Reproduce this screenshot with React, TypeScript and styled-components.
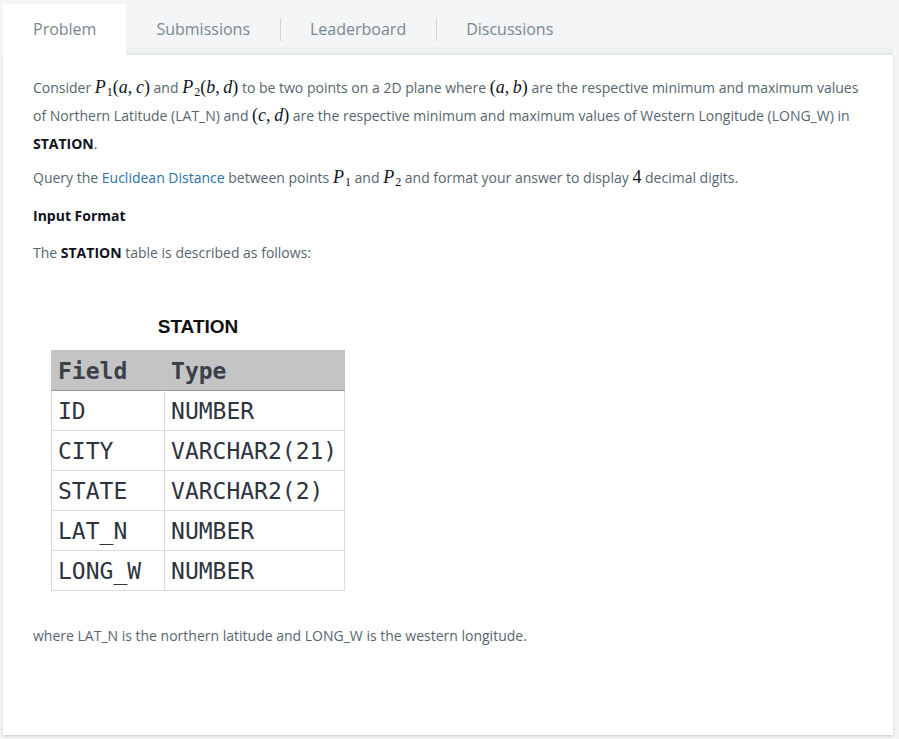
import React from "react";
import styled, { createGlobalStyle } from "styled-components";

const Global = createGlobalStyle`
  html, body { margin: 0; padding: 0; background: #f3f5f6; }
  body { font-family: "Open Sans", "Noto Sans", sans-serif; }
  * { box-sizing: border-box; }
`;

const Page = styled.div`
  height: 739px;
  padding: 4px 6px 4px 3px;
  display: flex;
  flex-direction: column;
`;

const TabBar = styled.div`
  display: flex;
  align-items: stretch;
  height: 51px;
  background: linear-gradient(to bottom, #f3f5f6 0%, #f3f5f6 80%, #e8ebec 100%);
`;

const Tab = styled.div<{ $active?: boolean; $sep?: boolean }>`
  position: relative;
  display: flex;
  align-items: center;
  padding: 0 30px 2px 30px;
  font-size: 16px;
  color: #79888f;
  background: ${(p) => (p.$active ? "#ffffff" : "transparent")};
  ${(p) =>
    p.$sep &&
    `
    &::before {
      content: "";
      position: absolute;
      left: 0;
      top: 14px;
      height: 23px;
      width: 1px;
      background: #cfd5d8;
    }
  `}
`;

const Card = styled.div`
  flex: 1;
  background: #ffffff;
  box-shadow: 0 1px 3px rgba(0, 0, 0, 0.18);
  padding: 19px 30px 30px 30px;
  color: #56666f;
  font-size: 14px;
`;

const Para = styled.p<{ $mt?: number }>`
  margin: ${(p) => p.$mt ?? 0}px 0 0 0;
  line-height: 28px;
`;

const Heading = styled.p<{ $mt?: number }>`
  margin: ${(p) => p.$mt ?? 0}px 0 0 0;
  line-height: 28px;
  font-weight: 700;
  color: #0e141e;
`;

const Strong = styled.strong`
  color: #0e141e;
  font-weight: 700;
`;

const Link = styled.a`
  color: #2b72a8;
  text-decoration: none;
`;

const M = styled.span`
  font-family: "Liberation Serif", "DejaVu Serif", serif;
  font-style: italic;
  font-size: 18px;
  line-height: 1;
  color: #0e141e;
`;

const MU = styled.span`
  font-family: "Liberation Serif", "DejaVu Serif", serif;
  font-style: normal;
  font-size: 18px;
  line-height: 1;
  color: #0e141e;
`;

const Sub = styled.span`
  display: inline-block;
  font-style: normal;
  font-size: 12px;
  line-height: 1;
  transform: translateY(3px);
  margin-left: 1px;
`;

const Figure = styled.div`
  margin: 47px 0 0 18px;
  width: 294px;
`;

const FigTitle = styled.div`
  font-family: "Liberation Sans", Arial, sans-serif;
  font-weight: 700;
  font-size: 19px;
  color: #111;
  text-align: center;
  line-height: 26px;
  margin-bottom: 10px;
`;

const Table = styled.table`
  border-collapse: collapse;
  width: 294px;
  font-family: "DejaVu Sans Mono", monospace;
  font-size: 23px;
  color: #2e3440;
`;

const Th = styled.th<{ $w: number }>`
  width: ${(p) => p.$w}px;
  height: 40px;
  background: #c4c4c4;
  text-align: left;
  padding: 0 6px;
  font-weight: 700;
  color: #3a3f48;
  border: 1px solid #c4c4c4;
  border-bottom: 1px solid #9a9a9a;
  & + & {
    border-left: 1px solid #d8d8d8;
  }
`;

const Td = styled.td`
  height: 40px;
  padding: 0 6px;
  border: 1px solid #dcdcdc;
  white-space: nowrap;
`;

const rows: [string, string][] = [
  ["ID", "NUMBER"],
  ["CITY", "VARCHAR2(21)"],
  ["STATE", "VARCHAR2(2)"],
  ["LAT_N", "NUMBER"],
  ["LONG_W", "NUMBER"],
];

const T = "\u2009";

export default function App() {
  return (
    <>
      <Global />
      <Page>
        <TabBar>
          <Tab $active>Problem</Tab>
          <Tab>Submissions</Tab>
          <Tab $sep>Leaderboard</Tab>
          <Tab $sep>Discussions</Tab>
        </TabBar>
        <Card>
          <Para>
            Consider <M>P<Sub>1</Sub></M><MU>(</MU><M>a</M><MU>,{T}</MU><M>c</M><MU>)</MU> and{" "}
            <M>P<Sub>2</Sub></M><MU>(</MU><M>b</M><MU>,{T}</MU><M>d</M><MU>)</MU> to be two points on a 2D plane where{" "}
            <MU>(</MU><M>a</M><MU>,{T}</MU><M>b</M><MU>)</MU> are the respective minimum and maximum values of
            Northern Latitude (LAT_N) and <MU>(</MU><M>c</M><MU>,{T}</MU><M>d</M><MU>)</MU> are the respective
            minimum and maximum values of Western Longitude (LONG_W) in <Strong>STATION</Strong>.
          </Para>
          <Para $mt={6}>
            Query the <Link href="#">Euclidean Distance</Link> between points <M>P<Sub>1</Sub></M> and{" "}
            <M>P<Sub>2</Sub></M> and format your answer to display <MU>4</MU> decimal digits.
          </Para>
          <Heading $mt={10}>Input Format</Heading>
          <Para $mt={9}>
            The <Strong>STATION</Strong> table is described as follows:
          </Para>
          <Figure>
            <FigTitle>STATION</FigTitle>
            <Table>
              <thead>
                <tr>
                  <Th $w={114}>Field</Th>
                  <Th $w={180}>Type</Th>
                </tr>
              </thead>
              <tbody>
                {rows.map(([f, t]) => (
                  <tr key={f}>
                    <Td>{f}</Td>
                    <Td>{t}</Td>
                  </tr>
                ))}
              </tbody>
            </Table>
          </Figure>
          <Para $mt={31}>where LAT_N is the northern latitude and LONG_W is the western longitude.</Para>
        </Card>
      </Page>
    </>
  );
}
